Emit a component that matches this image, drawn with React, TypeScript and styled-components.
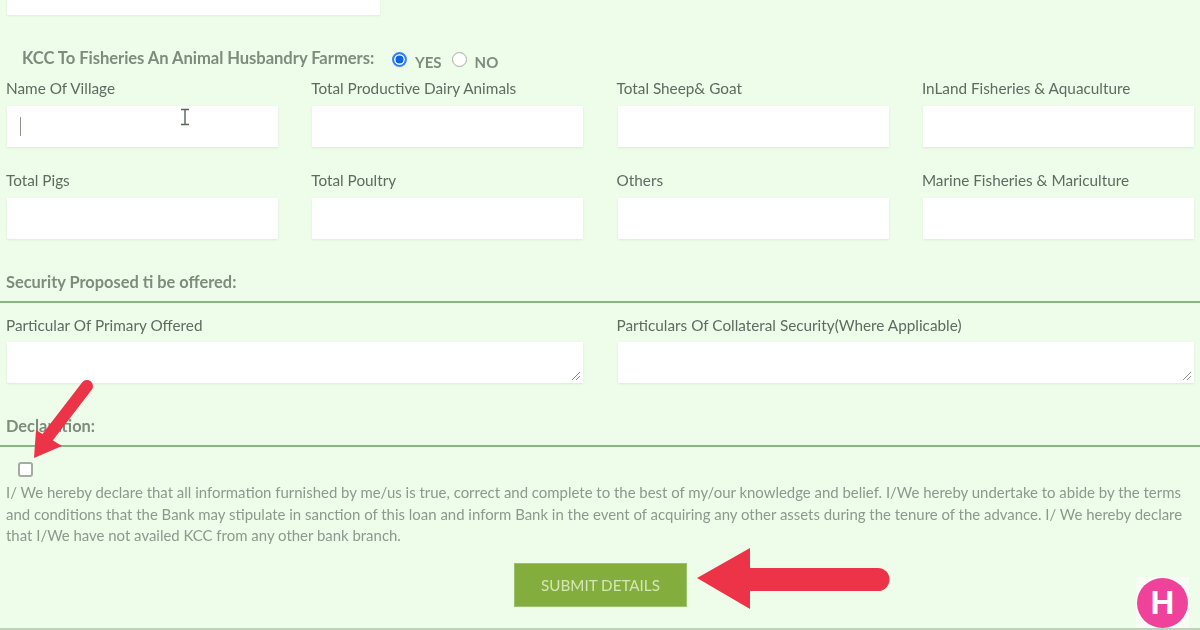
import React from "react";
import styled, { createGlobalStyle } from "styled-components";

const Global = createGlobalStyle`
  html, body { margin: 0; padding: 0; background: #eefdea; }
  body { font-family: "Lato", "Liberation Sans", sans-serif; }
`;

const Page = styled.div`
  position: relative;
  width: 1200px;
  height: 630px;
  overflow: hidden;
  background: #eefdea;
  box-sizing: border-box;
  border-bottom: 2px solid #bcd3b8;
`;

const Content = styled.form`
  display: flex;
  flex-direction: column;
  padding: 0 7px 0 6px;
  filter: blur(0.45px);
`;

const TopInput = styled.div`
  width: 373px;
  height: 15px;
  margin-left: 1px;
  background: #fff;
  box-shadow: 0 1px 2px rgba(120, 140, 120, 0.14);
`;

const KccRow = styled.div`
  display: flex;
  align-items: center;
  height: 20px;
  margin-top: 34px;
  padding-left: 16px;
`;

const KccTitle = styled.span`
  font-size: 16.6px;
  font-weight: 700;
  color: #7e8b7d;
  letter-spacing: -0.05px;
  width: 370px;
  white-space: nowrap;
  position: relative;
  top: -1px;
`;

const RadioDot = styled.span<{ $on?: boolean }>`
  width: 15px;
  height: 15px;
  flex: none;
  box-sizing: border-box;
  border-radius: 50%;
  border: ${(p) => (p.$on ? "2px solid #3b82f6" : "1.5px solid #a3aba3")};
  background: ${(p) => (p.$on ? "#0b63e8" : "#fff")};
  box-shadow: ${(p) => (p.$on ? "inset 0 0 0 1.5px #fff" : "none")};
`;

const RadioText = styled.span<{ $wide?: boolean }>`
  font-size: 15px;
  color: #7e8b7d;
  font-weight: 700;
  margin: 4px ${(p) => (p.$wide ? "10px" : "0")} 0 8px;
  position: relative;
  top: 1px;
`;

const FieldGrid = styled.div`
  display: grid;
  grid-template-columns: repeat(4, 273px);
  column-gap: 32.3px;
  row-gap: 23.5px;
  margin-top: 10px;
`;

const Field = styled.div`
  display: flex;
  flex-direction: column;
`;

const Label = styled.label`
  font-size: 15.3px;
  line-height: 18px;
  height: 18px;
  color: #5f6b60;
  white-space: nowrap;
`;

const InputBox = styled.div`
  position: relative;
  height: 41px;
  margin: 9px 0 0 1px;
  width: 271px;
  background: #fff;
  box-shadow: 0 1px 2px rgba(120, 140, 120, 0.16);
`;

const Caret = styled.span`
  position: absolute;
  left: 13px;
  top: 11px;
  width: 1px;
  height: 19px;
  background: #8b948b;
`;

const SectionTitle = styled.h3<{ $top: number }>`
  margin: ${(p) => p.$top}px 0 0;
  font-size: 16.4px;
  line-height: 20px;
  height: 20px;
  font-weight: 700;
  color: #7e8b7d;
  white-space: nowrap;
`;

const Rule = styled.div`
  height: 2px;
  margin: 9px -7px 0 -6px;
  background: #8db583;
`;

const TextGrid = styled.div`
  display: grid;
  grid-template-columns: 578px 578px;
  column-gap: 32.5px;
  margin-top: 13px;
`;

const TextAreaBox = styled(InputBox)`
  width: 576px;
  height: 41px;
  margin-top: 8px;
`;

const Grip = styled.svg`
  position: absolute;
  right: 2px;
  bottom: 2px;
  width: 10px;
  height: 10px;
`;

const CheckBox = styled.span`
  display: block;
  width: 15px;
  height: 15px;
  margin: 15px 0 0 12px;
  box-sizing: border-box;
  border: 2px solid #a5aaa5;
  border-radius: 3px;
  background: #fff;
`;

const Declaration = styled.p`
  margin: 5px 0 0;
  width: 1186px;
  font-size: 14.95px;
  line-height: 21.5px;
  color: #8d998c;
`;

const Actions = styled.div`
  display: flex;
  justify-content: flex-start;
  margin: 16.5px 0 0 508px;
`;

const Submit = styled.button`
  width: 173px;
  height: 44px;
  border: 1px solid #9cc26d;
  background: #83ae3d;
  color: #d5e6b4;
  font-family: "Lato", "Liberation Sans", sans-serif;
  font-size: 15.2px;
  padding: 0;
`;

const Overlay = styled.svg`
  position: absolute;
  left: 0;
  top: 0;
  pointer-events: none;
`;

const Badge = styled.div`
  position: absolute;
  left: 1137px;
  top: 578px;
  width: 51px;
  height: 50px;
  border-radius: 50%;
  background: #f0429b;
  color: #fff;
  font-family: "Liberation Sans", sans-serif;
  font-weight: 700;
  font-size: 33px;
  line-height: 50px;
  text-align: center;
`;

const BadgeBack = styled.div`
  position: absolute;
  left: 1136px;
  top: 577px;
  width: 53px;
  height: 53px;
  background: #f7fdf5;
`;

const row1 = ["Name Of Village", "Total Productive Dairy Animals", "Total Sheep& Goat", "InLand Fisheries & Aquaculture"];
const row2 = ["Total Pigs", "Total Poultry", "Others", "Marine Fisheries & Mariculture"];

export default function App() {
  return (
    <Page>
      <Global />
      <Content>
        <TopInput />
        <KccRow>
          <KccTitle>KCC To Fisheries An Animal Husbandry Farmers:</KccTitle>
          <RadioDot $on />
          <RadioText $wide>YES</RadioText>
          <RadioDot />
          <RadioText>NO</RadioText>
        </KccRow>
        <FieldGrid>
          {[...row1, ...row2].map((l, i) => (
            <Field key={l}>
              <Label>{l}</Label>
              <InputBox>{i === 0 && <Caret />}</InputBox>
            </Field>
          ))}
        </FieldGrid>
        <SectionTitle $top={33.5}>Security Proposed ti be offered:</SectionTitle>
        <Rule />
        <TextGrid>
          {["Particular Of Primary Offered", "Particulars Of Collateral Security(Where Applicable)"].map((l) => (
            <Field key={l}>
              <Label>{l}</Label>
              <TextAreaBox>
                <Grip viewBox="0 0 10 10">
                  <path d="M1 9 L9 1 M5 9 L9 5" stroke="#8f958f" strokeWidth="1" fill="none" />
                </Grip>
              </TextAreaBox>
            </Field>
          ))}
        </TextGrid>
        <SectionTitle $top={33}>Declaration:</SectionTitle>
        <Rule />
        <CheckBox />
        <Declaration>
          I/ We hereby declare that all information furnished by me/us is true, correct and complete to the best of my/our knowledge and belief. I/We hereby undertake to abide by the terms and conditions that the Bank may stipulate in sanction of this loan and inform Bank in the event of acquiring any other assets during the tenure of the advance. I/ We hereby declare that I/We have not availed KCC from any other bank branch.
        </Declaration>
        <Actions>
          <Submit type="button">SUBMIT DETAILS</Submit>
        </Actions>
      </Content>
      <Overlay width="1200" height="630" viewBox="0 0 1200 630">
        <path d="M181 109.5h8M181 124.5h8M185 110v14" stroke="#5a625a" strokeWidth="1.4" fill="none" />
        <path d="M34 458 L36 430 L62 446 Z" fill="#ec3347" />
        <path d="M47 438 L87 386" stroke="#ec3347" strokeWidth="12" strokeLinecap="round" fill="none" />
        <path d="M697 578 L750 548 L750 609 Z" fill="#ec3347" />
        <path d="M749 568 H878 A11.5 11.5 0 0 1 878 591 H749 Z" fill="#ec3347" />
      </Overlay>
      <BadgeBack />
      <Badge>H</Badge>
    </Page>
  );
}
